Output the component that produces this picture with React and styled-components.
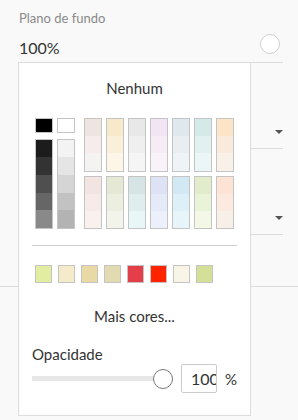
import React from 'react';
import styled, { createGlobalStyle } from 'styled-components';

const GlobalStyle = createGlobalStyle`
  html, body {
    margin: 0;
    padding: 0;
    background: #f9f9f9;
    font-family: Lato, "Open Sans", sans-serif;
    color: #333;
  }
`;

const grays = ['#1c1c1c', '#333333', '#4f4f4f', '#666666', '#898989'];
const lights = ['#f3f3f3', '#e5e5e5', '#d5d5d5', '#c2c2c2', '#b3b3b3'];

const palette = [
  ['#efe5e0', '#f5eceb', '#f5f3f2'],
  ['#f7e9c9', '#faf0d9', '#fdf6e8'],
  ['#e8e8e8', '#efefef', '#f5f5f5'],
  ['#f3e4f3', '#f6ecf6', '#f9f3f9'],
  ['#dfe8ef', '#e9eef2', '#eef4f6'],
  ['#d3eae8', '#e0f1f0', '#ebf7f7'],
  ['#fbe5c6', '#f9eadb', '#f9f1e8'],
  ['#f2e4e0', '#f6ebe8', '#faf1ee'],
  ['#e5e8d5', '#ecefdf', '#f3f4e9'],
  ['#d6e4e5', '#e0edee', '#e9f6f7'],
  ['#dde2f5', '#e5eaf9', '#ebf0fb'],
  ['#d2e9f3', '#ddf0f7', '#e7f5fa'],
  ['#e2eccc', '#e9f3d8', '#f2f7e6'],
  ['#fde3d6', '#fceae0', '#f9efe9'],
];

const recent = ['#e2eda0', '#f5ebca', '#e9daa5', '#e2dab0', '#e43f48', '#ff2300', '#f8f5e6', '#d4df97'];

const Screen = styled.div`
  position: relative;
  width: 298px;
  height: 420px;
  overflow: hidden;
`;

const Panel = styled.div`
  padding: 10px 15px 0 19px;
`;

const Label = styled.div`
  font-size: 13px;
  line-height: 16px;
  color: #8a8a8a;
`;

const ValueRow = styled.div`
  margin-top: 8px;
  height: 28px;
  display: flex;
  justify-content: space-between;
  align-items: flex-start;
  padding-right: 3px;
  border-bottom: 1px solid #dcdcdc;
`;

const Value = styled.div`
  padding-top: 4px;
  font-size: 16px;
  line-height: 19px;
  color: #333;
`;

const ColorDot = styled.div`
  width: 20px;
  height: 20px;
  box-sizing: border-box;
  border-radius: 50%;
  border: 1px solid #cfcfcf;
  background: #fff;
`;

const DropRow = styled.div`
  height: 86px;
  display: flex;
  align-items: flex-end;
  justify-content: flex-end;
  padding-bottom: 14px;
  box-sizing: border-box;
  border-bottom: 1px solid #dcdcdc;
`;

const Caret = styled.div`
  width: 0;
  height: 0;
  border-left: 4px solid transparent;
  border-right: 4px solid transparent;
  border-top: 4px solid #555;
`;

const Spacer = styled.div`
  height: 51px;
  border-bottom: 1px solid #dcdcdc;
`;

const Popup = styled.div`
  position: absolute;
  left: 18px;
  top: 62px;
  width: 233px;
  height: 354px;
  box-sizing: border-box;
  background: #fff;
  border: 1px solid #dcdcdc;
  padding: 16px 13px 0;
`;

const CenterText = styled.div`
  text-align: center;
  font-size: 15px;
  line-height: 18px;
  color: #333;
  margin-top: ${(p) => p.$mt || 0}px;
`;

const SwatchArea = styled.div`
  margin: 21px 0 0 3px;
  height: 111px;
  overflow: hidden;
  display: flex;
`;

const MonoGroup = styled.div`
  display: flex;
  gap: 4px;
`;

const MonoCol = styled.div`
  display: flex;
  flex-direction: column;
  gap: 6px;
`;

const Square = styled.div`
  width: 18px;
  height: 17px;
  box-sizing: border-box;
  border: 1px solid #c4c4c4;
  background: ${(p) => p.$color};
`;

const Strip = styled.div`
  width: 18px;
  box-sizing: border-box;
  border: 1px solid #c4c4c4;
  display: flex;
  flex-direction: column;
  align-self: start;
`;

const Cell = styled.div`
  height: ${(p) => p.$h}px;
  background: ${(p) => p.$color};
`;

const ColorGrid = styled.div`
  margin-left: 9px;
  display: grid;
  grid-template-columns: repeat(7, 18px);
  column-gap: 4px;
  row-gap: 4px;
  align-content: start;
`;

const Divider = styled.div`
  margin-top: 16px;
  height: 1px;
  background: #cfcfcf;
`;

const RecentRow = styled.div`
  margin: 19px 0 0 3px;
  display: flex;
  gap: 6px;
`;

const RecentSwatch = styled.div`
  width: 17px;
  height: 18px;
  box-sizing: border-box;
  border: 1px solid #c4c4c4;
  background: ${(p) => p.$color};
`;

const SectionTitle = styled.div`
  margin-top: 20px;
  font-size: 15px;
  line-height: 18px;
  color: #333;
`;

const SliderRow = styled.div`
  margin-top: 1px;
  display: flex;
  align-items: center;
`;

const Track = styled.div`
  position: relative;
  width: 141px;
  height: 5px;
  background: #e6e6e6;
`;

const Thumb = styled.div`
  position: absolute;
  top: -7px;
  width: 20px;
  height: 20px;
  box-sizing: border-box;
  border-radius: 50%;
  border: 1.5px solid #7a7a7a;
  background: #fff;
`;

const NumberBox = styled.div`
  margin-left: 8px;
  width: 36px;
  height: 29px;
  box-sizing: border-box;
  border: 1px solid #cccccc;
  border-radius: 2px;
  padding-left: 9px;
  overflow: hidden;
  white-space: nowrap;
  font-size: 16px;
  line-height: 27px;
  color: #333;
`;

const Unit = styled.span`
  margin-left: 8px;
  font-size: 15px;
  color: #333;
`;

export default function App() {
  const opacity = 100;
  return (
    <Screen>
      <GlobalStyle />
      <Panel>
        <Label>Plano de fundo</Label>
        <ValueRow>
          <Value>100%</Value>
          <ColorDot />
        </ValueRow>
        <DropRow><Caret /></DropRow>
        <DropRow><Caret /></DropRow>
      </Panel>
      <Spacer />

      <Popup>
        <CenterText>Nenhum</CenterText>
        <SwatchArea>
          <MonoGroup>
            <MonoCol>
              <Square $color="#000" />
              <Strip>
                {grays.map((c) => <Cell key={c} $h={17.7} $color={c} />)}
              </Strip>
            </MonoCol>
            <MonoCol>
              <Square $color="#fff" />
              <Strip>
                {lights.map((c) => <Cell key={c} $h={17.7} $color={c} />)}
              </Strip>
            </MonoCol>
          </MonoGroup>
          <ColorGrid>
            {palette.map((col, i) => (
              <Strip key={i}>
                {col.map((c) => <Cell key={c} $h={17.2} $color={c} />)}
              </Strip>
            ))}
          </ColorGrid>
        </SwatchArea>
        <Divider />
        <RecentRow>
          {recent.map((c) => <RecentSwatch key={c} $color={c} />)}
        </RecentRow>
        <CenterText $mt={24}>Mais cores...</CenterText>
        <SectionTitle>Opacidade</SectionTitle>
        <SliderRow>
          <Track>
            <Thumb style={{ left: `calc(${opacity}% - 20px)` }} />
          </Track>
          <NumberBox>100</NumberBox>
          <Unit>%</Unit>
        </SliderRow>
      </Popup>
    </Screen>
  );
}
